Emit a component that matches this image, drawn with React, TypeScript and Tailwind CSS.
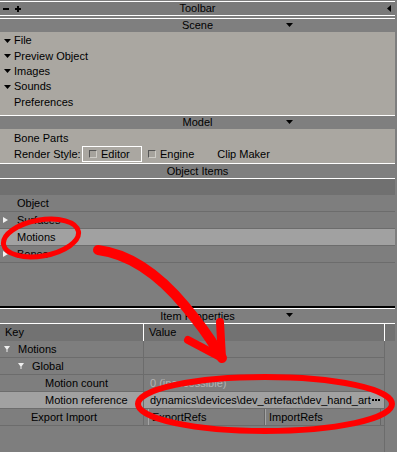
import React from "react";

function DownTri({ color = "#000" }: { color?: string }) {
  return (
    <svg width="7" height="4" viewBox="0 0 7 4" className="block">
      <polygon points="0,0 7,0 3.5,4" fill={color} />
    </svg>
  );
}

function SectionHeader({ title, tall = false }: { title: string; tall?: boolean }) {
  return (
    <div
      className={
        tall
          ? "relative h-[14px] bg-[#7f7f7f] flex items-center justify-center leading-none"
          : "relative h-[13px] bg-[#7f7f7f] flex items-center justify-center leading-none"
      }
    >
      <span>{title}</span>
      <span className="absolute left-[286px] top-[4px]">
        <DownTri />
      </span>
    </div>
  );
}

function SceneItem({ label, tri = true }: { label: string; tri?: boolean }) {
  return (
    <div className="h-[15.4px] flex items-center leading-none">
      <span className="w-[14px] pl-[4px] flex items-center">{tri && <DownTri />}</span>
      <span>{label}</span>
    </div>
  );
}

function CheckBox() {
  return (
    <span className="inline-block w-[8px] h-[8px] border-t border-l border-[#555555] border-b border-r border-b-[#cfcdc8] border-r-[#cfcdc8] bg-[#a6a39d]" />
  );
}

function ListRow({ label, tri = false, active = false }: { label: string; tri?: boolean; active?: boolean }) {
  return (
    <div
      className={
        active
          ? "h-[17px] bg-[#a1a1a1] border-b border-[#6c6c6c] flex items-center leading-none"
          : "h-[17px] border-b border-[#6c6c6c] flex items-center leading-none"
      }
    >
      <span className="w-[17px] pl-[3px] flex items-center">
        {tri && (
          <svg width="5" height="6" viewBox="0 0 5 6" className="block">
            <polygon points="0,0 5,3 0,6" fill="#f2f2f2" />
          </svg>
        )}
      </span>
      <span>{label}</span>
    </div>
  );
}

function TreeTri() {
  return (
    <svg width="6" height="6" viewBox="0 0 6 6" className="block">
      <polygon points="0,0 6,0 3.5,3.5 3.5,6 2.5,6 2.5,3.5" fill="#eeeeee" />
    </svg>
  );
}

function PropRow({
  indent,
  tri = false,
  label,
  active = false,
  children,
}: {
  indent: string;
  tri?: boolean;
  label: string;
  active?: boolean;
  children?: React.ReactNode;
}) {
  return (
    <div
      className={
        active
          ? "h-[17px] grid grid-cols-[143px_1fr] border-b border-[#6c6c6c] bg-[#a1a1a1] leading-none"
          : "h-[17px] grid grid-cols-[143px_1fr] border-b border-[#6c6c6c] leading-none"
      }
    >
      <div className={`flex items-center ${indent}`}>
        {tri && (
          <span className="w-[14px] flex items-center">
            <TreeTri />
          </span>
        )}
        <span>{label}</span>
      </div>
      <div className="border-l border-[#6c6c6c] flex items-center min-w-0 overflow-hidden">{children}</div>
    </div>
  );
}

export default function App() {
  return (
    <div className="relative w-[397px] h-[452px] overflow-hidden bg-[#7e7e7e] text-[11px] text-black font-['Liberation_Sans',Arial,sans-serif]">
      <div className="w-[395px] flex flex-col">
        <div className="h-px" />
        <div className="h-px bg-white" />
        {/* Toolbar */}
        <div className="h-[13px] bg-[#7a7a7a] grid grid-cols-[1fr_auto_1fr] items-center leading-none">
          <div className="flex items-center gap-[6px] pl-[3px]">
            <span className="inline-block w-[6px] h-[2px] bg-black" />
            <span className="relative inline-block w-[6px] h-[6px]">
              <span className="absolute left-0 top-[2px] w-[6px] h-[2px] bg-black" />
              <span className="absolute left-[2px] top-0 w-[2px] h-[6px] bg-black" />
            </span>
          </div>
          <span>Toolbar</span>
          <div className="flex justify-end pr-[4px]">
            <svg width="4" height="7" viewBox="0 0 4 7" className="block">
              <polygon points="4,0 4,7 0,3.5" fill="#000" />
            </svg>
          </div>
        </div>
        <div className="h-px bg-white" />
        <div className="h-[2px] bg-[#7e7e7e]" />
        <div className="h-px bg-white" />
        <SectionHeader title="Scene" />
        <div className="h-[83px] bg-[#aaa7a1] pt-[1px]">
          <SceneItem label="File" />
          <SceneItem label="Preview Object" />
          <SceneItem label="Images" />
          <SceneItem label="Sounds" />
          <SceneItem label="Preferences" tri={false} />
        </div>
        <div className="h-px bg-white" />
        <SectionHeader title="Model" />
        <div className="h-[34px] bg-[#aaa7a1] pt-[2px]">
          <div className="h-[15.4px] flex items-center leading-none pl-[14px]">Bone Parts</div>
          <div className="h-[15.4px] flex items-center leading-none pl-[14px]">
            <span className="w-[68px]">Render Style:</span>
            <span className="w-[60px] h-[16px] border border-white flex items-center pl-[6px] gap-[4px]">
              <CheckBox />
              <span>Editor</span>
            </span>
            <span className="flex items-center gap-[4px] pl-[6px]">
              <CheckBox />
              <span>Engine</span>
            </span>
            <span className="pl-[23px]">Clip Maker</span>
          </div>
        </div>
        <div className="h-px bg-white" />
        <div className="h-[14px] bg-[#7f7f7f] flex items-center justify-center leading-none">Object Items</div>
        <div className="h-px bg-white" />
        <div className="h-[16px] bg-[#707070]" />
        <ListRow label="Object" />
        <ListRow label="Surfaces" tri />
        <ListRow label="Motions" active />
        <ListRow label="Bones" tri />
        <div className="h-[43px]" />
        <div className="h-[2px] bg-black" />
        <div className="h-px bg-white" />
        <SectionHeader title="Item Properties" tall />
        <div className="h-px bg-white" />
        {/* table header */}
        <div className="h-[17px] flex bg-[#727272] leading-none">
          <div className="w-[143px] flex items-center pl-[5px]">Key</div>
          <div className="w-[241px] border-l border-white flex items-center pl-[5px]">Value</div>
          <div className="flex-1 border-l border-white" />
        </div>
        {/* table body */}
        <div className="flex h-[120px]">
          <div className="w-[384px] flex flex-col">
            <PropRow indent="pl-[4px]" tri label="Motions" />
            <PropRow indent="pl-[18px]" tri label="Global" />
            <PropRow indent="pl-[45px]" label="Motion count">
              <span className="pl-[6px] text-[#b3b3b3] whitespace-nowrap">0 (inaccessible)</span>
            </PropRow>
            <PropRow indent="pl-[45px]" label="Motion reference" active>
              <div className="flex items-center w-full pl-[6px] pr-[4px] whitespace-nowrap">
                <span className="overflow-hidden flex-1 min-w-0">dynamics\devices\dev_artefact\dev_hand_art</span>
                <span className="flex items-center gap-[1px] pl-[1px]">
                  <span className="inline-block w-[2px] h-[2px] bg-black" />
                  <span className="inline-block w-[2px] h-[2px] bg-black" />
                  <span className="inline-block w-[2px] h-[2px] bg-black" />
                </span>
              </div>
            </PropRow>
            <PropRow indent="pl-[31px]" label="Export Import">
              <div className="flex h-full pl-[4px] w-full">
                <span className="w-[117px] h-full border-l border-[#a4a4a4] border-r border-r-[#666666] flex items-center pl-[3px]">ExportRefs</span>
                <span className="w-[116px] h-full border-l border-[#a4a4a4] border-r border-r-[#666666] flex items-center pl-[3px]">ImportRefs</span>
              </div>
            </PropRow>
          </div>
          <div className="flex-1 border-l border-[#6c6c6c]" />
        </div>
      </div>

      {/* red annotations */}
      <svg className="absolute inset-0 pointer-events-none" width="397" height="452" viewBox="0 0 397 452">
        <ellipse cx="41" cy="238" rx="38" ry="18" transform="rotate(-10 41 238)" fill="none" stroke="#ff0000" strokeWidth="5" />
        <path
          d="M98 250 C 130 254, 160 276, 185 306 S 213 344, 222 358"
          stroke="#ff0000"
          strokeWidth="10"
          fill="none"
          strokeLinecap="round"
        />
        <path d="M220 322 L222 358 L188 340" stroke="#ff0000" strokeWidth="8" fill="none" strokeLinecap="round" strokeLinejoin="round" />
        <ellipse cx="265" cy="404" rx="127" ry="27" fill="none" stroke="#ff0000" strokeWidth="6" />
      </svg>
    </div>
  );
}
